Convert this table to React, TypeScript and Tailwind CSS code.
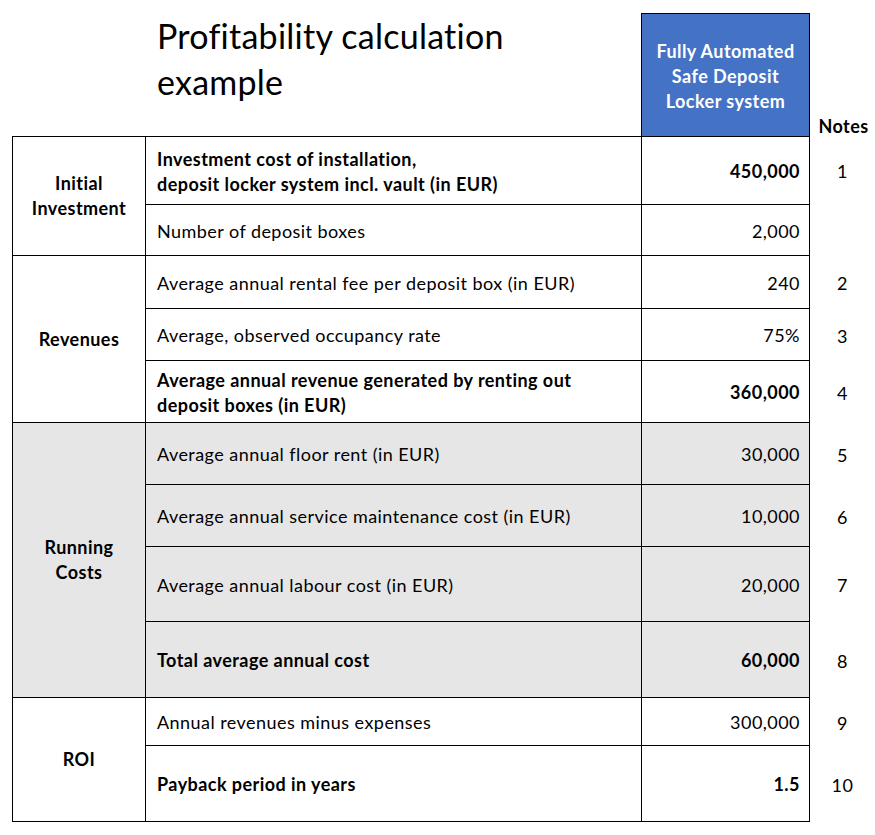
import React from "react";

type Row = {
  label: string[];
  value: string;
  note?: string;
  bold?: boolean;
  gray?: boolean;
  first?: boolean;
};

export default function App() {
  const cell1 = "col-start-1 border-l border-r border-b border-black flex items-center justify-center text-center font-bold leading-[25px]";
  const labelBase = "col-start-2 border-r border-b border-black flex flex-col justify-center pl-[11px] leading-[25px] pt-[2px]";
  const valueBase = "col-start-3 border-r border-b border-black flex items-center justify-end pr-[9px] pt-[2px]";
  const noteBase = "col-start-4 flex items-center justify-center pt-[2px]";

  const row = (r: Row, key: number) => {
    const bg = r.gray ? " bg-[#e7e6e6]" : " bg-white";
    const top = r.first ? " border-t" : "";
    const w = r.bold ? " font-bold" : "";
    return (
      <React.Fragment key={key}>
        <div className={labelBase + bg + top + w}>
          {r.label.map((l, i) => (
            <div key={i}>{l}</div>
          ))}
        </div>
        <div className={valueBase + bg + top + w}>{r.value}</div>
        <div className={noteBase}>{r.note ?? ""}</div>
      </React.Fragment>
    );
  };

  return (
    <div className="w-[875px] h-[835px] bg-white text-black font-[Lato,sans-serif] text-[18px] tracking-[0.45px] pl-[12px]">
      <div className="grid grid-cols-[134px_496px_168px_65px] grid-rows-[136px_69px_51px_53px_52px_62px_62px_62px_75px_76px_48px_76px]">
        {/* header */}
        <div className="col-start-2 row-start-1 pl-[11px] pt-[13px] text-[34px] tracking-[0.25px] leading-[46px] whitespace-nowrap">
          <div>Profitability calculation</div>
          <div>example</div>
        </div>
        <div className="col-start-3 row-start-1 mt-[13px] -ml-px bg-[#4472c4] border-t border-l border-r border-black flex flex-col items-center justify-center text-white font-bold leading-[25px] text-center pt-[3px]">
          <div>Fully Automated</div>
          <div>Safe Deposit</div>
          <div>Locker system</div>
        </div>
        <div className="col-start-4 row-start-1 flex items-end justify-center pl-[2px] font-bold leading-[18px] mb-[1px]">Notes</div>

        {/* Initial Investment */}
        <div className={cell1 + " row-start-2 row-span-2 border-t"}>
          <div>Initial<br />Investment</div>
        </div>
        {[
          { label: ["Investment cost of installation,", "deposit locker system incl. vault (in EUR)"], value: "450,000", note: "1", bold: true, first: true },
          { label: ["Number of deposit boxes"], value: "2,000" },
        ].map((r, i) => row(r as Row, i))}

        {/* Revenues */}
        <div className={cell1 + " row-start-4 row-span-3"}>
          <div>Revenues</div>
        </div>
        {[
          { label: ["Average annual rental fee per deposit box (in EUR)"], value: "240", note: "2" },
          { label: ["Average, observed occupancy rate"], value: "75%", note: "3" },
          { label: ["Average annual revenue generated by renting out", "deposit boxes (in EUR)"], value: "360,000", note: "4", bold: true },
        ].map((r, i) => row(r as Row, 10 + i))}

        {/* Running Costs */}
        <div className={cell1 + " row-start-7 row-span-4 bg-[#e7e6e6]"}>
          <div>Running<br />Costs</div>
        </div>
        {[
          { label: ["Average annual floor rent (in EUR)"], value: "30,000", note: "5", gray: true },
          { label: ["Average annual service maintenance cost (in EUR)"], value: "10,000", note: "6", gray: true },
          { label: ["Average annual labour cost (in EUR)"], value: "20,000", note: "7", gray: true },
          { label: ["Total average annual cost"], value: "60,000", note: "8", bold: true, gray: true },
        ].map((r, i) => row(r as Row, 20 + i))}

        {/* ROI */}
        <div className={cell1 + " row-start-11 row-span-2"}>
          <div>ROI</div>
        </div>
        {[
          { label: ["Annual revenues minus expenses"], value: "300,000", note: "9" },
          { label: ["Payback period in years"], value: "1.5", note: "10", bold: true },
        ].map((r, i) => row(r as Row, 30 + i))}
      </div>
    </div>
  );
}
